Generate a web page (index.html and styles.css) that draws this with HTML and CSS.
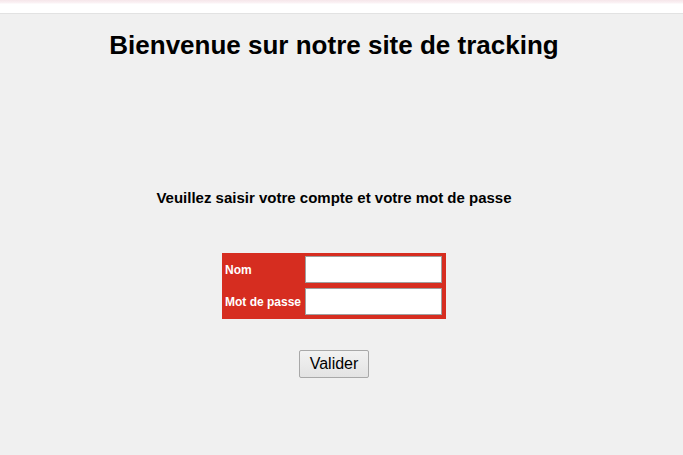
FILE: index.html
```html
<!DOCTYPE html>
<html lang="fr">
<head>
<meta charset="utf-8">
<title>Tracking</title>
<link rel="stylesheet" href="styles.css">
</head>
<body>
<div class="topbar"></div>
<main class="page">
  <h1 class="title">Bienvenue sur notre site de tracking</h1>
  <p class="subtitle">Veuillez saisir votre compte et votre mot de passe</p>
  <form class="login">
    <div class="box">
      <div class="row">
        <label class="lbl" for="nom">Nom</label>
        <input class="field" id="nom" type="text">
      </div>
      <div class="row">
        <label class="lbl" for="mdp">Mot de passe</label>
        <input class="field" id="mdp" type="password">
      </div>
    </div>
    <button class="btn" type="button">Valider</button>
  </form>
</main>
</body>
</html>
```
FILE: styles.css
```css
html, body {
  margin: 0;
  padding: 0;
  background: #f0f0f0;
  font-family: "Liberation Sans", Arial, sans-serif;
  height: 100%;
  overflow: hidden;
}
.topbar {
  height: 13px;
  background: linear-gradient(#f6e6ea 0, #fbf3f5 3px, #ffffff 4px, #ffffff 12px);
  border-bottom: 1px solid #e2e2e2;
}
.page {
  width: 668px;
  display: flex;
  flex-direction: column;
  align-items: center;
}
.title {
  margin: 16px 0 0;
  font-size: 26px;
  font-weight: bold;
  color: #000;
  line-height: 30px;
}
.subtitle {
  margin: 129px 0 0;
  font-size: 15px;
  font-weight: bold;
  color: #000;
  line-height: 18px;
}
.login {
  margin-top: 46px;
  display: flex;
  flex-direction: column;
  align-items: center;
}
.box {
  background: #d62d20;
  padding: 3px 4px 4px 3px;
  display: flex;
  flex-direction: column;
  gap: 5px;
}
.row {
  display: flex;
  align-items: center;
}
.lbl {
  width: 80px;
  color: #fff;
  font-size: 12px;
  font-weight: bold;
}
.field {
  box-sizing: border-box;
  width: 137px;
  height: 27px;
  margin: 0;
  border: 1px solid #a0a0a0;
  background: #fff;
  padding: 0 3px;
}
.btn {
  margin-top: 31px;
  box-sizing: border-box;
  width: 70px;
  height: 28px;
  font-family: "Liberation Sans", Arial, sans-serif;
  font-size: 16px;
  color: #000;
  background: linear-gradient(#f2f2f2, #e3e3e3);
  border: 1px solid #a8a8a8;
  border-radius: 2px;
  padding: 0;
}
```
